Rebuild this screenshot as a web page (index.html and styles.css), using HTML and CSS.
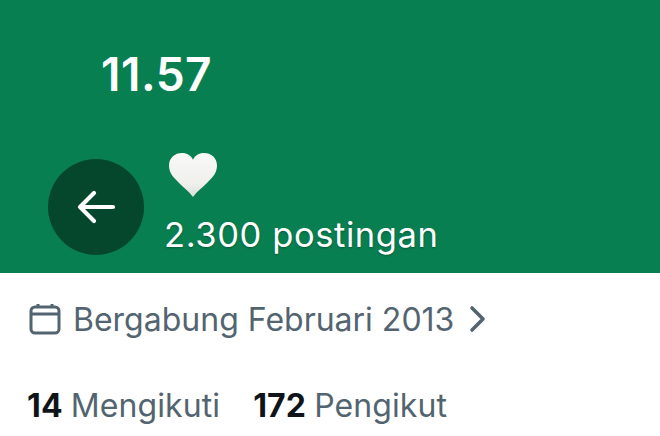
FILE: index.html
```html
<!DOCTYPE html>
<html lang="id">
<head>
<meta charset="utf-8">
<title>Profil</title>
<link rel="stylesheet" href="styles.css">
</head>
<body>
<header class="banner">
  <div class="time">11.57</div>
  <div class="bar">
    <button class="back" aria-label="Kembali">
      <svg viewBox="0 0 40 40" width="40" height="40"><path d="M37 20H4M18 6 4 20l14 14" fill="none" stroke="#fff" stroke-width="4.200" stroke-linecap="round" stroke-linejoin="round"/></svg>
    </button>
    <div class="info">
      <svg class="heart" viewBox="0 0 50 48" width="50" height="46" preserveAspectRatio="none"><defs><linearGradient id="hg" x1="0" y1="0" x2="0" y2="1"><stop offset="0" stop-color="#f9f9f7"/><stop offset=".7" stop-color="#efefec"/><stop offset="1" stop-color="#dcdeda"/></linearGradient></defs><path d="M25 47C21 41 14 36 8 29 3 24 1 19 1 14 1 6 7 1 14 1c5 0 9 2.500 11 7 2-4.500 6-7 11-7 7 0 13 5 13 13 0 5-2 10-7 15-6 7-13 12-17 18Z" fill="url(#hg)"/></svg>
      <div class="count">2.300 postingan</div>
    </div>
  </div>
</header>
<section class="meta">
  <div class="joined">
    <svg class="cal" viewBox="0 0 34 34" width="34" height="34"><path d="M3 9a4 4 0 0 1 4-4h20a4 4 0 0 1 4 4v18a4 4 0 0 1-4 4H7a4 4 0 0 1-4-4ZM3 12h28M10 2v4M24 2v4" fill="none" stroke="#536471" stroke-width="3"/></svg>
    <span>Bergabung Februari 2013</span>
    <svg class="chev" viewBox="0 0 20 28" width="20" height="28"><path d="m4 3 11 11L4 25" fill="none" stroke="#536471" stroke-width="3.600" stroke-linecap="round" stroke-linejoin="round"/></svg>
  </div>
  <div class="stats">
    <span><b>14</b> Mengikuti</span>
    <span><b>172</b> Pengikut</span>
  </div>
</section>
</body>
</html>
```
FILE: styles.css
```css
* { box-sizing: border-box; }
html, body { margin: 0; height: 100%; }
body { width: 660px; height: 436px; overflow: hidden; background: #fff; font-family: Inter, "Liberation Sans", sans-serif; }
.banner { height: 273px; background: #087f50; color: #fff; padding: 47px 0 0 48px; display: flex; flex-direction: column; }
.time { margin-left: 53px; font-size: 46px; line-height: 54px; font-weight: 600; letter-spacing: 0.5px; }
.bar { display: flex; align-items: flex-end; gap: 20px; margin-top: 51px; }
.back { width: 96px; height: 96px; border-radius: 50%; border: 0; padding: 0; background: #04472c; display: flex; align-items: center; justify-content: center; }
.info { display: flex; flex-direction: column; margin-bottom: -2px; }
.heart { margin-left: 4px; display: block; }
.count { font-size: 34.500px; line-height: 44px; letter-spacing: 0.6px; margin-top: 15px; text-shadow: 0 1px 2px rgba(0,0,0,.3); white-space: nowrap; }
.meta { padding: 26px 0 0 28px; color: #536471; font-size: 32px; }
.joined { display: flex; align-items: center; gap: 11px; height: 40px; white-space: nowrap; }
.chev { margin-left: 3px; }
.stats { display: flex; gap: 33px; margin: 47px 0 0 -1px; line-height: 40px; white-space: nowrap; letter-spacing: 0.1px; }
.stats b { color: #0f1419; font-weight: 700; margin-right: -1px; }
```
